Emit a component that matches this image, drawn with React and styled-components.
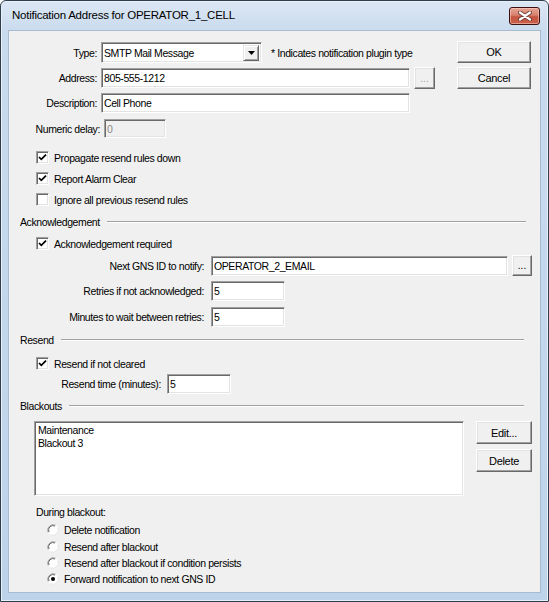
import React from "react";
import styled, { createGlobalStyle } from "styled-components";

const GlobalStyle = createGlobalStyle`
  html, body {
    margin: 0;
    padding: 0;
    background: #ffffff;
  }
  * {
    box-sizing: border-box;
  }
`;

const Window = styled.div`
  width: 549px;
  height: 602px;
  display: flex;
  flex-direction: column;
  border: 1px solid #2f3d4d;
  border-radius: 6px 6px 0 0;
  background: linear-gradient(#dce7f4 0px, #c9dbee 30px, #bdd3ea 100%);
  padding: 0 7px 8px 7px;
  box-shadow: inset 0 0 0 1px #e8f0f8;
  font-family: "Liberation Sans", Arial, sans-serif;
  font-size: 10.5px;
  letter-spacing: -0.4px;
  color: #000;
`;

const TitleBar = styled.div`
  height: 29px;
  display: flex;
  align-items: center;
  justify-content: space-between;
  padding: 0 1px 2px 4px;
`;

const Title = styled.span`
  font-family: "Liberation Sans", Arial, sans-serif;
  font-size: 11.5px;
  color: #000;
  letter-spacing: -0.25px;
`;

const CloseButton = styled.div`
  width: 31px;
  height: 18px;
  margin-top: 3px;
  display: flex;
  align-items: center;
  justify-content: center;
  border: 1px solid #3d1010;
  border-radius: 3px;
  background: linear-gradient(#e6a595 0%, #d7806e 45%, #c5553f 55%, #c9604b 100%);
  box-shadow: inset 0 0 0 1px rgba(255, 220, 210, 0.5);
`;

const Client = styled.div`
  flex: 1;
  background: #f0f0f0;
  border: 1px solid #a9bbd0;
  padding: 10px 0 0 0;
  display: flex;
  flex-direction: column;
`;

const TopArea = styled.div`
  display: flex;
  align-items: flex-start;
`;

const Form = styled.div`
  flex: 1;
  display: flex;
  flex-direction: column;
`;

const ButtonColumn = styled.div`
  width: 74px;
  margin-right: 9px;
  display: flex;
  flex-direction: column;
  gap: 4px;
`;

const Row = styled.div`
  display: flex;
  align-items: center;
  height: ${p => p.h || 21}px;
  margin-top: ${p => p.mt || 0}px;
  padding-left: ${p => p.pl || 0}px;
`;

const Label = styled.span`
  width: ${p => (p.w ? `${p.w}px` : "auto")};
  text-align: right;
  margin-right: ${p => p.gap || 4}px;
  white-space: nowrap;
`;

const TextBox = styled.div`
  width: ${p => p.w}px;
  height: ${p => p.h || 20}px;
  display: flex;
  align-items: center;
  padding-left: 2px;
  background: ${p => (p.disabled ? "#f0f0f0" : "#fff")};
  color: ${p => (p.disabled ? "#8a8a8a" : "#000")};
  border-top: 1px solid #a0a0a0;
  border-left: 1px solid #a0a0a0;
  border-right: 1px solid #fff;
  border-bottom: 1px solid #fff;
  box-shadow: inset 1px 1px 0 #696969, inset -1px -1px 0 #e3e3e3;
  white-space: nowrap;
  overflow: hidden;
`;

const Select = styled(TextBox)`
  justify-content: space-between;
  padding-right: 2px;
`;

const ArrowButton = styled.div`
  width: 16px;
  height: 16px;
  display: flex;
  align-items: center;
  justify-content: center;
  background: #f0f0f0;
  border-top: 1px solid #e3e3e3;
  border-left: 1px solid #e3e3e3;
  border-right: 1px solid #696969;
  border-bottom: 1px solid #696969;
  box-shadow: inset 1px 1px 0 #fff, inset -1px -1px 0 #a0a0a0;
`;

const Note = styled.span`
  margin-left: 9px;
  white-space: nowrap;
`;

const PushButton = styled.div`
  width: ${p => p.w || 74}px;
  height: ${p => p.h || 22}px;
  display: flex;
  align-items: center;
  justify-content: center;
  background: #f0f0f0;
  color: ${p => (p.disabled ? "#a0a0a0" : "#000")};
  border-top: 1px solid #fff;
  border-left: 1px solid #fff;
  border-right: 1px solid #696969;
  border-bottom: 1px solid #696969;
  box-shadow: inset -1px -1px 0 #a0a0a0, inset 1px 1px 0 #e3e3e3;
  margin-left: ${p => p.ml || 0}px;
  white-space: nowrap;
  font-size: ${p => (p.small ? 10 : 11)}px;
  letter-spacing: ${p => (p.small ? 0 : -0.3)}px;
`;

const CheckBoxBox = styled.span`
  width: 13px;
  height: 13px;
  display: flex;
  align-items: center;
  justify-content: center;
  background: #fff;
  border-top: 1px solid #a0a0a0;
  border-left: 1px solid #a0a0a0;
  border-right: 1px solid #fff;
  border-bottom: 1px solid #fff;
  box-shadow: inset 1px 1px 0 #696969, inset -1px -1px 0 #e3e3e3;
  margin-right: 5px;
  flex-shrink: 0;
`;

const SectionHeader = styled.div`
  display: flex;
  align-items: center;
  height: 14px;
  margin-top: ${p => p.mt || 0}px;
  padding-left: 11px;
  margin-right: ${p => p.mr || 14}px;
`;

const SectionLine = styled.div`
  flex: 1;
  height: 2px;
  margin-left: 7px;
  border-top: 1px solid #a0a0a0;
  border-bottom: 1px solid #fff;
`;

const BlackoutArea = styled.div`
  display: flex;
  align-items: flex-start;
  margin-top: 8px;
  padding-left: 25px;
`;

const ListBox = styled.div`
  width: 430px;
  height: 75px;
  padding: 2px 3px;
  background: #fff;
  border-top: 1px solid #a0a0a0;
  border-left: 1px solid #a0a0a0;
  border-right: 1px solid #fff;
  border-bottom: 1px solid #fff;
  box-shadow: inset 1px 1px 0 #696969, inset -1px -1px 0 #e3e3e3;
  display: flex;
  flex-direction: column;
`;

const ListItem = styled.div`
  height: 13px;
  line-height: 13px;
`;

const SideButtons = styled.div`
  display: flex;
  flex-direction: column;
  gap: 5px;
  margin-left: 12px;
`;

const SubLabel = styled.div`
  height: 14px;
  display: flex;
  align-items: center;
  margin-top: 9px;
  padding-left: 27px;
`;

const RadioGroup = styled.div`
  display: flex;
  flex-direction: column;
  margin-top: 3px;
`;

const RadioRow = styled.div`
  height: 16.4px;
  display: flex;
  align-items: center;
  padding-left: 38px;
`;

const RadioCircle = styled.svg`
  width: 12px;
  height: 12px;
  margin-right: 5px;
  flex-shrink: 0;
`;

function CloseGlyph() {
  return (
    <svg width="14" height="10" viewBox="0 0 14 10">
      <path d="M2 1.5 L12 8.5 M12 1.5 L2 8.5" stroke="#6b3a33" strokeWidth="4" strokeLinecap="round" />
      <path d="M2 1.5 L12 8.5 M12 1.5 L2 8.5" stroke="#fff" strokeWidth="2.2" strokeLinecap="round" />
    </svg>
  );
}

function DropArrow() {
  return (
    <svg width="7" height="4" viewBox="0 0 7 4">
      <path d="M0 0 H7 L3.5 4 Z" fill="#000" />
    </svg>
  );
}

function CheckBox({ checked, label, mt, pl = 27 }) {
  return (
    <Row h={21} mt={mt} pl={pl}>
      <CheckBoxBox>
        {checked && (
          <svg width="9" height="9" viewBox="0 0 9 9">
            <path d="M1 4 L3.3 6.4 L8 1.6" stroke="#000" strokeWidth="1.7" fill="none" />
          </svg>
        )}
      </CheckBoxBox>
      <span>{label}</span>
    </Row>
  );
}

function Radio({ selected, label }) {
  return (
    <RadioRow>
      <RadioCircle viewBox="0 0 12 12">
        <circle cx="6" cy="6" r="5.5" fill="#fff" />
        <path d="M1.2 8.5 A5.5 5.5 0 0 1 8.5 1.2" stroke="#a0a0a0" strokeWidth="1" fill="none" />
        <path d="M2 8 A4.5 4.5 0 0 1 8 2" stroke="#696969" strokeWidth="1" fill="none" />
        <path d="M3.5 10.8 A5.5 5.5 0 0 0 10.8 3.5" stroke="#e3e3e3" strokeWidth="1" fill="none" />
        {selected && <circle cx="6" cy="6" r="2" fill="#000" />}
      </RadioCircle>
      <span>{label}</span>
    </RadioRow>
  );
}

export default function App() {
  return (
    <>
      <GlobalStyle />
      <Window>
        <TitleBar>
          <Title>Notification Address for OPERATOR_1_CELL</Title>
          <CloseButton>
            <CloseGlyph />
          </CloseButton>
        </TitleBar>
        <Client>
          <TopArea>
            <Form>
              <Row h={21} mt={1}>
                <Label w={88}>Type:</Label>
                <Select w={161} h={21}>
                  <span>SMTP Mail Message</span>
                  <ArrowButton>
                    <DropArrow />
                  </ArrowButton>
                </Select>
                <Note>* Indicates notification plugin type</Note>
              </Row>
              <Row h={22} mt={4}>
                <Label w={88}>Address:</Label>
                <TextBox w={309}>805-555-1212</TextBox>
                <PushButton w={21} h={22} ml={4} disabled small>...</PushButton>
              </Row>
              <Row h={20} mt={4}>
                <Label w={88}>Description:</Label>
                <TextBox w={309}>Cell Phone</TextBox>
              </Row>
              <Row h={19} mt={6} pl={19}>
                <Label w={72} gap={4}>Numeric delay:</Label>
                <TextBox w={62} h={19} disabled>0</TextBox>
              </Row>
            </Form>
            <ButtonColumn>
              <PushButton h={22}>OK</PushButton>
              <PushButton h={22}>Cancel</PushButton>
            </ButtonColumn>
          </TopArea>

          <CheckBox checked label="Propagate resend rules down" mt={9} />
          <CheckBox checked label="Report Alarm Clear" />
          <CheckBox label="Ignore all previous resend rules" />

          <SectionHeader mt={5}>
            <span>Acknowledgement</span>
            <SectionLine />
          </SectionHeader>
          <CheckBox checked label="Acknowledgement required" mt={4} />
          <Row h={21} mt={1}>
            <Label w={195} gap={7}>Next GNS ID to notify:</Label>
            <TextBox w={297}>OPERATOR_2_EMAIL</TextBox>
            <PushButton w={20} h={21} ml={4} small>...</PushButton>
          </Row>
          <Row h={20} mt={5}>
            <Label w={195} gap={7}>Retries if not acknowledged:</Label>
            <TextBox w={74}>5</TextBox>
          </Row>
          <Row h={20} mt={6}>
            <Label w={195} gap={7}>Minutes to wait between retries:</Label>
            <TextBox w={74}>5</TextBox>
          </Row>

          <SectionHeader mt={6} mr={16}>
            <span>Resend</span>
            <SectionLine />
          </SectionHeader>
          <CheckBox checked label="Resend if not cleared" mt={6} />
          <Row h={20} pl={42}>
            <Label w={110} gap={6}>Resend time (minutes):</Label>
            <TextBox w={64}>5</TextBox>
          </Row>

          <SectionHeader mt={5} mr={16}>
            <span>Blackouts</span>
            <SectionLine />
          </SectionHeader>
          <BlackoutArea>
            <ListBox>
              <ListItem>Maintenance</ListItem>
              <ListItem>Blackout 3</ListItem>
            </ListBox>
            <SideButtons>
              <PushButton w={56} h={23}>Edit...</PushButton>
              <PushButton w={56} h={23}>Delete</PushButton>
            </SideButtons>
          </BlackoutArea>

          <SubLabel>During blackout:</SubLabel>
          <RadioGroup>
            <Radio label="Delete notification" />
            <Radio label="Resend after blackout" />
            <Radio label="Resend after blackout if condition persists" />
            <Radio selected label="Forward notification to next GNS ID" />
          </RadioGroup>
        </Client>
      </Window>
    </>
  );
}
